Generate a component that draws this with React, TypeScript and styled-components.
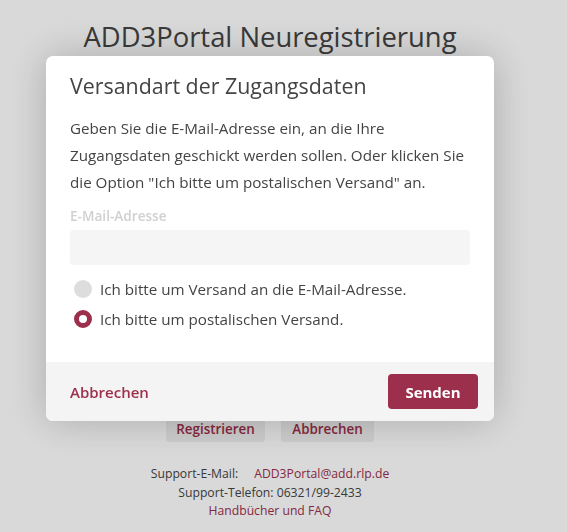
import React, { useState } from "react";
import styled, { createGlobalStyle } from "styled-components";

const Global = createGlobalStyle`
  html, body { margin: 0; padding: 0; background: #fff; }
  body { font-family: "Segoe UI", "Open Sans", "Noto Sans", sans-serif; color: #444; }
`;

const crimson = "#9c2f4b";

const Page = styled.div`
  width: 540px;
  min-height: 532px;
  display: flex;
  flex-direction: column;
  align-items: center;
`;

const PageTitle = styled.h1`
  margin: 18px 0 0;
  font-size: 27.4px;
  font-weight: 400;
  line-height: 38px;
  color: #444;
`;

const Spacer = styled.div`
  height: 360px;
`;

const ButtonRow = styled.div`
  display: flex;
  gap: 16px;
`;

const GhostButton = styled.button<{ $w: number }>`
  font-family: inherit;
  font-size: 13.4px;
  font-weight: 600;
  color: ${crimson};
  background: #f0f0f0;
  border: none;
  border-radius: 3px;
  height: 26px;
  width: ${(p) => p.$w}px;
  padding: 0;
`;

const Support = styled.div`
  margin-top: 23px;
  font-size: 12.2px;
  line-height: 18.5px;
  text-align: center;
  color: #444;
`;

const Link = styled.a<{ $gap?: number }>`
  color: ${crimson};
  text-decoration: none;
  margin-left: ${(p) => p.$gap ?? 0}px;
`;

const Overlay = styled.div`
  position: fixed;
  inset: 0;
  background: rgba(0, 0, 0, 0.15);
  display: flex;
  justify-content: flex-start;
  padding: 56px 0 0 46px;
`;

const Modal = styled.div`
  width: 448px;
  height: 365px;
  background: #fff;
  border-radius: 7px;
  box-shadow: 0 0 40px rgba(0, 0, 0, 0.22);
  display: flex;
  flex-direction: column;
  overflow: hidden;
`;

const Body = styled.div`
  flex: 1;
  padding: 16px 24px 0;
`;

const ModalTitle = styled.h2`
  margin: 0;
  font-size: 21.4px;
  font-weight: 400;
  line-height: 28px;
  color: #444;
`;

const Text = styled.p`
  margin: 15px 0 0;
  font-size: 15.2px;
  line-height: 27px;
  color: #444;
`;

const Label = styled.label`
  display: block;
  margin-top: 11px;
  font-size: 13.6px;
  font-weight: 600;
  line-height: 18px;
  color: #d0d0d0;
`;

const Input = styled.input`
  display: block;
  box-sizing: border-box;
  width: 400px;
  height: 35px;
  margin-top: 5px;
  border: none;
  border-radius: 4px;
  background: #f5f5f5;
  outline: none;
`;

const Options = styled.div`
  margin-top: 12px;
  display: flex;
  flex-direction: column;
  gap: 6px;
`;

const Option = styled.div`
  display: flex;
  align-items: center;
  gap: 8px;
  padding-left: 4px;
  font-size: 15.2px;
  line-height: 24px;
  cursor: pointer;
`;

const Radio = styled.span<{ $on: boolean }>`
  box-sizing: border-box;
  width: 18px;
  height: 18px;
  border-radius: 50%;
  background: ${(p) => (p.$on ? "#fff" : "#ddd")};
  border: ${(p) => (p.$on ? `5.5px solid ${crimson}` : "none")};
`;

const Footer = styled.div`
  height: 59px;
  background: #f4f4f4;
  display: flex;
  align-items: center;
  justify-content: space-between;
  padding: 0 16px 0 24px;
`;

const TextButton = styled.button`
  font-family: inherit;
  font-size: 15px;
  font-weight: 600;
  color: ${crimson};
  background: none;
  border: none;
  padding: 0;
`;

const PrimaryButton = styled.button`
  font-family: inherit;
  font-size: 15px;
  font-weight: 700;
  color: #fff;
  background: ${crimson};
  border: none;
  border-radius: 4px;
  width: 90px;
  height: 35px;
`;

export default function App() {
  const [choice, setChoice] = useState("post");

  return (
    <>
      <Global />
      <Page>
        <PageTitle>ADD3Portal Neuregistrierung</PageTitle>
        <Spacer />
        <ButtonRow>
          <GhostButton $w={99}>Registrieren</GhostButton>
          <GhostButton $w={93}>Abbrechen</GhostButton>
        </ButtonRow>
        <Support>
          <div>
            Support-E-Mail:<Link $gap={16} href="#">ADD3Portal@add.rlp.de</Link>
          </div>
          <div>Support-Telefon: 06321/99-2433</div>
          <div>
            <Link href="#">Handbücher und FAQ</Link>
          </div>
        </Support>
      </Page>

      <Overlay>
        <Modal>
          <Body>
            <ModalTitle>Versandart der Zugangsdaten</ModalTitle>
            <Text>
              Geben Sie die E-Mail-Adresse ein, an die Ihre Zugangsdaten geschickt werden sollen. Oder
              klicken Sie die Option "Ich bitte um postalischen Versand" an.
            </Text>
            <Label>E-Mail-Adresse</Label>
            <Input disabled />
            <Options>
              <Option onClick={() => setChoice("mail")}>
                <Radio $on={choice === "mail"} />
                Ich bitte um Versand an die E-Mail-Adresse.
              </Option>
              <Option onClick={() => setChoice("post")}>
                <Radio $on={choice === "post"} />
                Ich bitte um postalischen Versand.
              </Option>
            </Options>
          </Body>
          <Footer>
            <TextButton>Abbrechen</TextButton>
            <PrimaryButton>Senden</PrimaryButton>
          </Footer>
        </Modal>
      </Overlay>
    </>
  );
}
